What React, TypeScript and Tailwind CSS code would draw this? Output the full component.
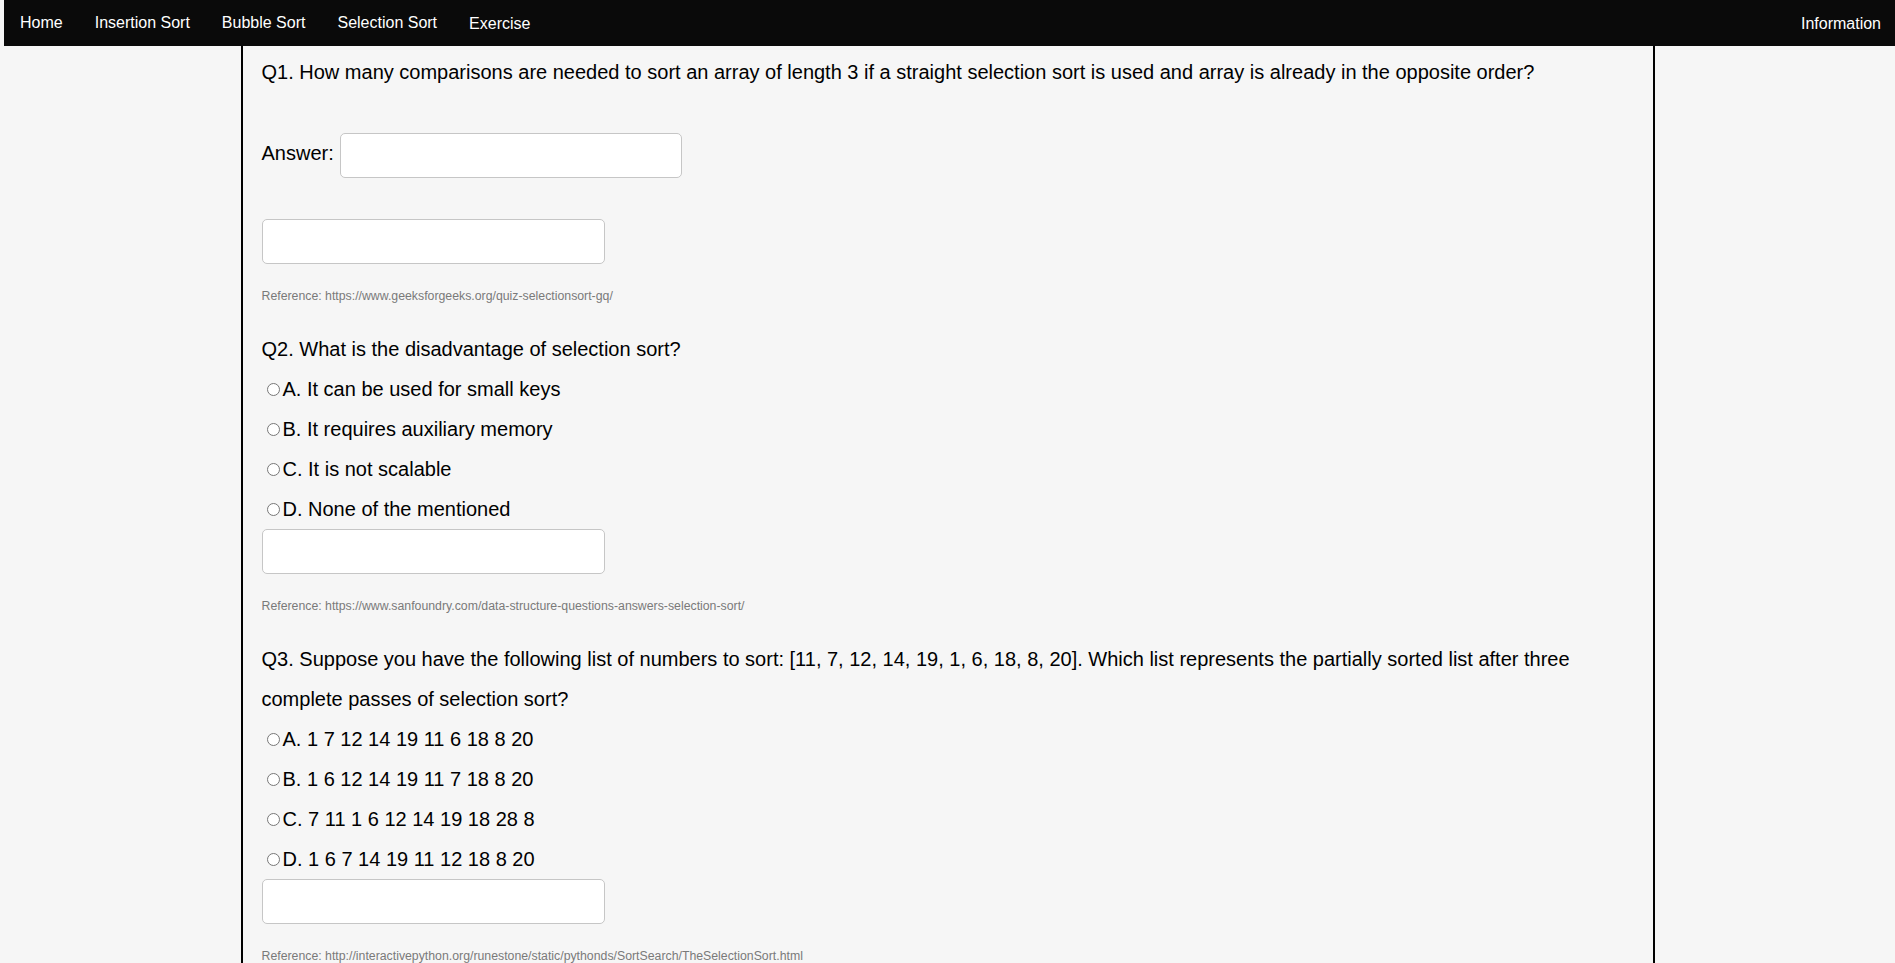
import React from 'react';

type Question = {
  title: string;
  options: string[];
  reference: string;
};

const questions: Question[] = [
  {
    title: 'Q2. What is the disadvantage of selection sort?',
    options: [
      'A. It can be used for small keys',
      'B. It requires auxiliary memory',
      'C. It is not scalable',
      'D. None of the mentioned',
    ],
    reference: 'Reference: https://www.sanfoundry.com/data-structure-questions-answers-selection-sort/',
  },
  {
    title:
      'Q3. Suppose you have the following list of numbers to sort: [11, 7, 12, 14, 19, 1, 6, 18, 8, 20]. Which list represents the partially sorted list after three complete passes of selection sort?',
    options: [
      'A. 1 7 12 14 19 11 6 18 8 20',
      'B. 1 6 12 14 19 11 7 18 8 20',
      'C. 7 11 1 6 12 14 19 18 28 8',
      'D. 1 6 7 14 19 11 12 18 8 20',
    ],
    reference: 'Reference: http://interactivepython.org/runestone/static/pythonds/SortSearch/TheSelectionSort.html',
  },
];

const navLinks = ['Home', 'Insertion Sort', 'Bubble Sort', 'Selection Sort'];

function ResultBox() {
  return (
    <input
      type="text"
      readOnly
      className="block w-[343px] h-[45px] bg-white border border-[#c6c6c6] rounded-[5px] outline-none"
    />
  );
}

function Reference({ text }: { text: string }) {
  return <p className="mt-[24px] text-[12.3px] leading-[16px] text-[#7a7a7a]">{text}</p>;
}

function MultipleChoice({ q, idx }: { q: Question; idx: number }) {
  return (
    <section className="mt-[25px]">
      <p className="leading-[40px]">{q.title}</p>
      {q.options.map((opt) => (
        <label key={opt} className="flex items-center h-[40px]">
          <input
            type="radio"
            name={`q${idx}`}
            className="m-0 ml-[5px] mr-[3px] w-[13px] h-[13px]"
          />
          <span>{opt}</span>
        </label>
      ))}
      <ResultBox />
      <Reference text={q.reference} />
    </section>
  );
}

export default function App() {
  return (
    <div className="min-h-screen bg-[#f6f6f6] text-black font-['Liberation_Sans',Arial,sans-serif]">
      <nav className="ml-1 h-[46px] bg-[#0a0a0a] text-white text-[16px] flex items-center justify-between">
        <div className="flex items-center">
          {navLinks.map((l) => (
            <a key={l} href="#" className="px-4">
              {l}
            </a>
          ))}
          <a href="#" className="px-4 pt-[2px]">
            Exercise
          </a>
        </div>
        <a href="#" className="px-[14px] pt-[2px]">
          Information
        </a>
      </nav>

      <main className="mx-auto w-[1414px] min-h-[917px] border-x-2 border-black px-[19px] pt-[6px] pb-10 text-[20px]">
        <section>
          <p className="leading-[40px]">
            Q1. How many comparisons are needed to sort an array of length 3 if a straight selection sort is used
            and array is already in the opposite order?
          </p>
          <div className="mt-[41px] flex items-center">
            <span className="mr-[6px] pb-[5px]">Answer:</span>
            <input
              type="text"
              className="w-[342px] h-[45px] bg-white border border-[#c6c6c6] rounded-[5px] outline-none px-2"
            />
          </div>
          <div className="mt-[41px]">
            <ResultBox />
          </div>
          <Reference text="Reference: https://www.geeksforgeeks.org/quiz-selectionsort-gq/" />
        </section>

        {questions.map((q, i) => (
          <MultipleChoice key={q.title} q={q} idx={i + 2} />
        ))}
      </main>
    </div>
  );
}
